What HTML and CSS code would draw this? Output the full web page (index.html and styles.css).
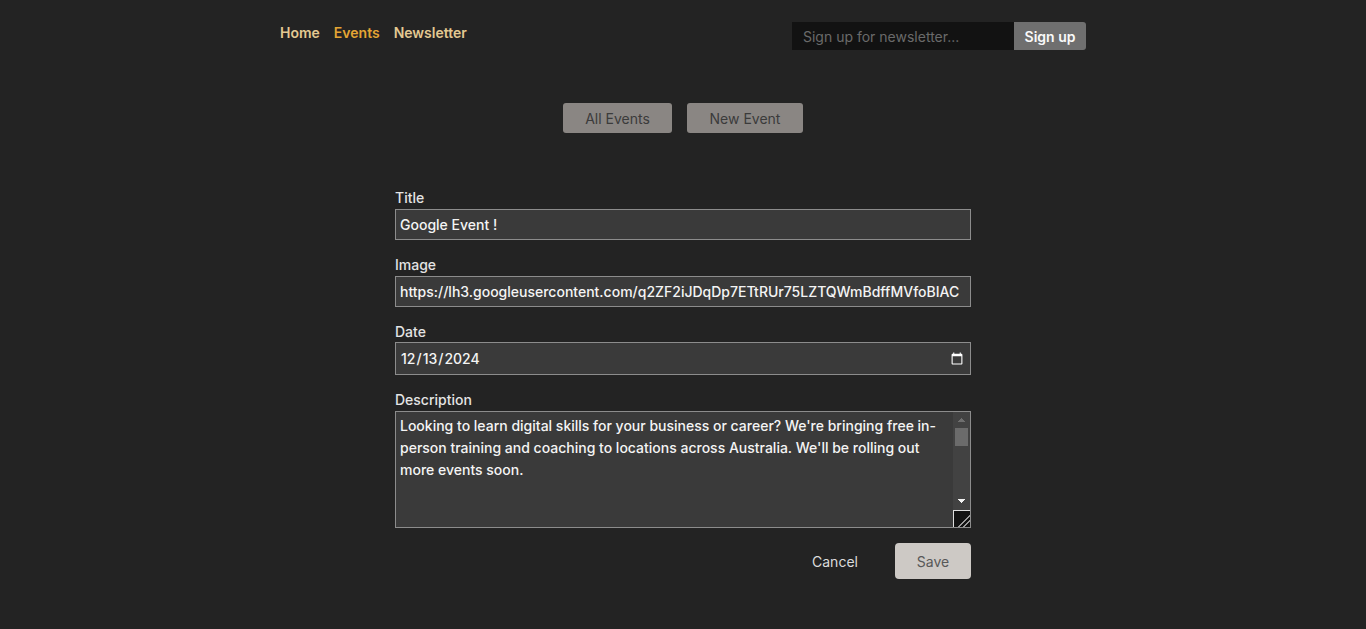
FILE: index.html
```html
<!DOCTYPE html>
<html lang="en">
<head>
<meta charset="utf-8">
<title>Edit Event</title>
<link rel="stylesheet" href="styles.css">
</head>
<body>
<div class="page">
  <header class="header">
    <nav class="nav">
      <a class="nav-link" href="#">Home</a>
      <a class="nav-link active" href="#">Events</a>
      <a class="nav-link" href="#">Newsletter</a>
    </nav>
    <form class="signup">
      <input class="signup-input" type="email" placeholder="Sign up for newsletter...">
      <button class="signup-btn" type="button">Sign up</button>
    </form>
  </header>

  <div class="tabs">
    <button class="tab" type="button">All Events</button>
    <button class="tab" type="button">New Event</button>
  </div>

  <form class="event-form">
    <label class="field">
      <span class="label">Title</span>
      <input class="input" type="text" value="Google Event !">
    </label>
    <label class="field">
      <span class="label">Image</span>
      <input class="input" type="text" value="https://lh3.googleusercontent.com/q2ZF2iJDqDp7ETtRUr75LZTQWmBdffMVfoBIAC">
    </label>
    <label class="field">
      <span class="label label-tight">Date</span>
      <input class="input date" type="date" value="2024-12-13">
    </label>
    <div class="field">
      <label class="label" for="desc">Description</label>
      <div class="textarea-wrap">
        <textarea id="desc" class="input textarea">Looking to learn digital skills for your business or career? We're bringing free in-person training and coaching to locations across Australia. We'll be rolling out more events soon.</textarea>
        <div class="scrollbar" aria-hidden="true">
          <span class="sb-btn sb-up"></span>
          <span class="sb-track"><span class="sb-thumb"></span></span>
          <span class="sb-btn sb-down"></span>
          <span class="sb-resizer"></span>
        </div>
      </div>
    </div>
    <div class="actions">
      <button class="cancel" type="button">Cancel</button>
      <button class="save" type="button">Save</button>
    </div>
  </form>
</div>
</body>
</html>
```

FILE: styles.css
```css
html, body {
  margin: 0;
  padding: 0;
  background: #232323;
  color-scheme: dark;
}

body {
  font-family: Inter, "Noto Sans", sans-serif;
  font-size: 14px;
  color: #e6e6e6;
}

.page {
  width: 806px;
  margin: 0 auto;
  padding-top: 22px;
}

.header {
  display: flex;
  justify-content: space-between;
  align-items: flex-start;
}

.nav {
  display: flex;
  gap: 14px;
  padding-top: 2px;
}

.nav-link {
  font-size: 14px;
  font-weight: 600;
  line-height: 17px;
  color: #e3c992;
  text-decoration: none;
}

.nav-link.active {
  color: #e3a534;
}

.signup {
  display: flex;
  margin: 0;
}

.signup-input {
  box-sizing: border-box;
  width: 222px;
  height: 28px;
  border: none;
  background: #121212;
  color: #ddd;
  font-family: inherit;
  font-size: 14px;
  padding: 0 11px;
  outline: none;
}

.signup-input::placeholder {
  color: #6a6a6a;
}

.signup-btn {
  box-sizing: border-box;
  width: 72px;
  height: 28px;
  border: none;
  border-radius: 0 3px 3px 0;
  background: #6f6f6f;
  color: #fafafa;
  font-family: inherit;
  font-size: 14px;
  font-weight: 600;
  padding: 0;
}

.tabs {
  display: flex;
  justify-content: center;
  gap: 15px;
  margin-top: 53px;
}

.tab {
  height: 30px;
  padding: 0 21px;
  border: none;
  border-radius: 3px;
  background: #8a8683;
  color: #3b3b3b;
  font-family: inherit;
  font-size: 14px;
  font-weight: 400;
}

.tab:first-child {
  width: 109px;
}

.tab:last-child {
  width: 116px;
}

.event-form {
  width: 576px;
  margin: 56px auto 0;
  display: flex;
  flex-direction: column;
  gap: 16px;
}

.field {
  display: flex;
  flex-direction: column;
}

.label {
  font-size: 14px;
  font-weight: 500;
  line-height: 17px;
  margin-bottom: 3px;
  color: #e4e4e4;
}

.label-tight {
  margin-bottom: 2px;
}

.input {
  box-sizing: border-box;
  width: 576px;
  height: 31px;
  margin: 0;
  border: 1px solid #8c8c8c;
  border-radius: 0;
  background: #3a3a3a;
  color: #f4f4f4;
  font-family: inherit;
  font-size: 14px;
  font-weight: 500;
  padding: 0 4px;
  outline: none;
}

.date {
  height: 33px;
  padding: 0 4px;
}

.date::-webkit-calendar-picker-indicator {
  filter: brightness(1.6);
  margin-right: 0;
}

.textarea-wrap {
  position: relative;
  width: 576px;
  height: 117px;
}

.textarea {
  display: block;
  height: 117px;
  padding: 3px 21px 3px 4px;
  line-height: 22px;
  resize: none;
  overflow: hidden;
}

.scrollbar {
  position: absolute;
  top: 1px;
  right: 1px;
  bottom: 1px;
  width: 17px;
  background: #424242;
  display: flex;
  flex-direction: column;
}

.sb-btn {
  display: block;
  height: 15px;
  flex: none;
  background-repeat: no-repeat;
  background-size: 7px 4px;
  background-position: center;
}

.sb-up {
  background-image: conic-gradient(from 139deg at 50% 0, #6e6e6e 0 82deg, transparent 0);
}

.sb-down {
  height: 16px;
  background-image: conic-gradient(from -41deg at 50% 100%, #f2f2f2 0 82deg, transparent 0);
}

.sb-track {
  flex: 1;
  padding: 1px 2px 0;
}

.sb-thumb {
  display: block;
  height: 18px;
  background: #6b6b6b;
}

.sb-resizer {
  display: block;
  flex: none;
  box-sizing: border-box;
  height: 17px;
  margin-top: 1px;
  background-color: #121212;
  border-top: 1px solid #dcdcdc;
  border-left: 1px solid #dcdcdc;
  background-image: linear-gradient(135deg, transparent 0 60%, #9a9a9a 60% 66%, transparent 66% 76%, #9a9a9a 76% 82%, transparent 82%);
}

.actions {
  display: flex;
  justify-content: flex-end;
  align-items: center;
  gap: 22px;
  margin-top: -1px;
}

.cancel {
  height: 36px;
  width: 76px;
  border: none;
  background: transparent;
  color: #dcdcdc;
  font-family: inherit;
  font-size: 14px;
  padding: 0;
}

.save {
  height: 36px;
  width: 76px;
  border: none;
  border-radius: 4px;
  background: #cdc9c5;
  color: #585858;
  font-family: inherit;
  font-size: 14px;
  padding: 0;
}
```
